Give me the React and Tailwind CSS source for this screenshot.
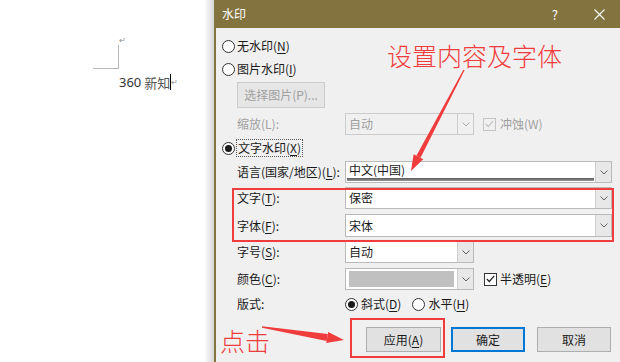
import React from 'react';

const font = { fontFamily: '"Noto Sans CJK SC", "Noto Sans", sans-serif' };

const Chevron = ({ disabled }) => (
  <svg width="8" height="5" viewBox="0 0 8 5">
    <path d="M0.5 0.5 L4 4 L7.5 0.5" fill="none" stroke={disabled ? '#a8a8a8' : '#606060'} strokeWidth="1" />
  </svg>
);

const Radio = ({ checked }) => (
  <span className="flex h-[13px] w-[13px] shrink-0 items-center justify-center rounded-full border border-[#333333] bg-white">
    {checked && <span className="h-[7px] w-[7px] rounded-full bg-[#1a1a1a]" />}
  </span>
);

const Check = ({ disabled }) => (
  <span className={disabled ? 'flex h-[13px] w-[13px] items-center justify-center border border-[#c4c4c4] bg-[#f0f0f0]' : 'flex h-[13px] w-[13px] items-center justify-center border border-[#333333] bg-white'}>
    <svg width="9" height="8" viewBox="0 0 9 8">
      <path d="M0.8 4 L3.3 6.5 L8.2 0.8" fill="none" stroke={disabled ? '#c4c4c4' : '#222222'} strokeWidth="1.2" />
    </svg>
  </span>
);

const Combo = ({ wide, value, disabled, swatch, bar }) => (
  <div className={`flex h-full ${wide ? 'w-[267px]' : 'w-[129px]'} ${disabled ? 'border border-[#cccccc] bg-[#f0f0f0]' : 'border border-[#b9b9b9] bg-white'}`}>
    <div className="flex flex-1 flex-col">
      <div className={`flex flex-1 items-center px-[3px] ${disabled ? 'text-[#a0a0a0]' : 'text-[#1a1a1a]'}`}>
        {swatch ? <div className="h-[16px] w-full bg-[#c0c0c0]" /> : value}
      </div>
      {bar && <div className="mx-[1px] mb-[1px] h-[3px] bg-gradient-to-b from-[#5a5a5a] to-[#9a9a9a]" />}
    </div>
    <div className={`flex w-[16px] items-center justify-center border-l ${disabled ? 'border-[#cccccc] bg-[#f0f0f0]' : 'border-[#cfcfcf] bg-[#e8e8e8]'}`}>
      <Chevron disabled={disabled} />
    </div>
  </div>
);

const Row = ({ label, className, children, disabled }) => (
  <div className={`ml-[21px] flex items-center ${className}`}>
    <span className={`w-[108px] ${disabled ? 'text-[#a0a0a0]' : 'text-[#1a1a1a]'}`}>{label}</span>
    {children}
  </div>
);

const U = ({ children }) => <span className="underline underline-offset-2">{children}</span>;

const App = () => {
  return (
    <div className="relative flex h-[362px] w-[620px] overflow-hidden bg-white text-[12px]" style={font}>
      {/* document page */}
      <div className="flex w-[204px] flex-col pl-[93px] pt-[36px]">
        <div className="flex">
          <div className="mt-[9px] h-[24px] w-[26px] border-b border-r border-[#b8b8b8]" />
          <span className="text-[8px] leading-none text-[#909090]">↵</span>
        </div>
        <div className="ml-[26px] mt-[5px] flex items-center leading-none">
          <span className="text-[13px] text-[#333333]" style={{ fontFamily: '"Noto Sans", sans-serif' }}>360 </span>
          <span className="ml-[3px] text-[13px] text-[#555555]">新知</span>
          <span className="h-[16px] w-[1px] bg-black" />
          <span className="text-[8px] text-[#909090]">↵</span>
        </div>
      </div>
      <div className="w-[10px] bg-gradient-to-r from-white to-[#d6d6d6]" />

      {/* dialog */}
      <div className="flex flex-1 flex-col border-l-2 border-[#83733f] bg-[#f0f0f0] leading-none">
        <div className="flex h-[28px] items-center bg-[#83733f] pl-[6px] text-white">
          <span>水印</span>
          <span className="ml-auto text-[13px]">?</span>
          <svg className="ml-[36px] mr-[15px]" width="11" height="11" viewBox="0 0 11 11">
            <path d="M0.5 0.5 L10.5 10.5 M10.5 0.5 L0.5 10.5" stroke="#ffffff" strokeWidth="1.1" />
          </svg>
        </div>

        <div className="ml-[6px] mt-[8px] flex h-[20px] items-center gap-[2px] text-[#1a1a1a]">
          <Radio />
          <span>无水印(<U>N</U>)</span>
        </div>
        <div className="ml-[6px] mt-[3px] flex h-[20px] items-center gap-[2px] text-[#1a1a1a]">
          <Radio />
          <span>图片水印(<U>I</U>)</span>
        </div>
        <div className="ml-[21px] mt-[3px] flex h-[26px] w-[88px] items-center justify-center border border-[#cccccc] bg-[#e6e6e6] text-[#a0a0a0]">
          选择图片(P)...
        </div>
        <Row label="缩放(L):" disabled className="mt-[5px] h-[22px]">
          <Combo value="自动" disabled />
          <span className="ml-[9px]"><Check disabled /></span>
          <span className="ml-[4px] text-[#a0a0a0]">冲蚀(W)</span>
        </Row>
        <div className="ml-[6px] mt-[3px] flex h-[20px] items-center gap-[1px] text-[#1a1a1a]">
          <Radio checked />
          <span className="border border-dotted border-[#555555] px-[1px] py-[2px]">文字水印(<U>X</U>)</span>
        </div>
        <Row label={<>语言(国家/地区)(<U>L</U>):</>} className="mt-[3px] h-[22px]">
          <Combo wide value="中文(中国)" bar />
        </Row>
        <Row label={<>文字(<U>T</U>):</>} className="mt-[4px] h-[22px]">
          <Combo wide value="保密" />
        </Row>
        <Row label={<>字体(<U>F</U>):</>} className="mt-[5px] h-[23px]">
          <Combo wide value="宋体" />
        </Row>
        <Row label={<>字号(<U>S</U>):</>} className="mt-[4px] h-[22px]">
          <Combo value="自动" />
        </Row>
        <Row label={<>颜色(<U>C</U>):</>} className="mt-[5px] h-[22px]">
          <Combo swatch />
          <span className="ml-[10px]"><Check /></span>
          <span className="ml-[3px] text-[#1a1a1a]">半透明(<U>E</U>)</span>
        </Row>
        <Row label="版式:" className="mt-[4px] h-[20px]">
          <Radio checked />
          <span className="ml-[3px] text-[#1a1a1a]">斜式(<U>D</U>)</span>
          <span className="ml-[11px]"><Radio /></span>
          <span className="ml-[3px] text-[#1a1a1a]">水平(<U>H</U>)</span>
        </Row>

        <div className="ml-[150px] mt-[13px] flex h-[25px] text-[#1a1a1a]">
          <div className="flex w-[75px] items-center justify-center border border-[#adadad] bg-[#e1e1e1]">应用(<U>A</U>)</div>
          <div className="ml-[10px] flex w-[74px] items-center justify-center border-2 border-[#0078d7] bg-[#e1e1e1]">确定</div>
          <div className="ml-[12px] flex w-[74px] items-center justify-center border border-[#adadad] bg-[#e1e1e1]">取消</div>
        </div>
      </div>

      {/* annotations */}
      <div className="pointer-events-none absolute left-[232px] top-[188px] h-[54px] w-[382px] border-2 border-[#f03c3c]" />
      <div className="pointer-events-none absolute left-[350px] top-[318px] h-[40px] w-[95px] border-2 border-[#f03c3c]" />
      <span className="absolute left-[387px] top-[43px] text-[25px] font-light leading-none text-[#f03c3c]">设置内容及字体</span>
      <span className="absolute left-[220px] top-[328px] text-[25px] font-light leading-none text-[#f03c3c]">点击</span>
      <svg className="pointer-events-none absolute left-0 top-0" width="620" height="362" viewBox="0 0 620 362">
        <polygon points="463.4,69.7 464.6,70.3 420.4,157.9 416.4,155.7" fill="#f03c3c" />
        <polygon points="411,171 423.2,159.3 413.6,154.3" fill="#f03c3c" />
        <polygon points="262,326.3 262,327.7 326.6,341.1 327.8,333.9" fill="#f03c3c" />
        <polygon points="344,340 326.2,343 328.2,332" fill="#f03c3c" />
      </svg>
    </div>
  );
};

export default App;
